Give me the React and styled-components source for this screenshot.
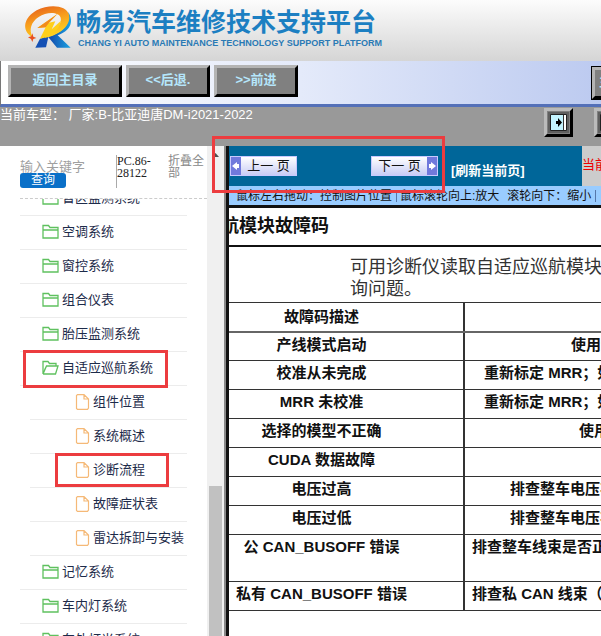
import React from 'react';
import styled, { createGlobalStyle, css } from 'styled-components';

const MENU = [
  { name: '盲区监测系统' },
  { name: '空调系统' },
  { name: '窗控系统' },
  { name: '组合仪表' },
  { name: '胎压监测系统' },
  {
    name: '自适应巡航系统',
    open: true,
    marked: true,
    children: [
      { name: '组件位置' },
      { name: '系统概述' },
      { name: '诊断流程', marked: true },
      { name: '故障症状表' },
      { name: '雷达拆卸与安装' },
    ],
  },
  { name: '记忆系统' },
  { name: '车内灯系统' },
  { name: '车外灯光系统' },
];

const FAULTS = [
  { desc: '产线模式启动', action: '使用诊断仪', indent: 106 },
  { desc: '校准从未完成', action: '重新标定 MRR；如', indent: 19 },
  { desc: 'MRR 未校准', action: '重新标定 MRR；如', indent: 19 },
  { desc: '选择的模型不正确', action: '使用诊断仪', indent: 114 },
  { desc: 'CUDA 数据故障', action: '', indent: 7 },
  { desc: '电压过高', action: '排查整车电压状态', indent: 45 },
  { desc: '电压过低', action: '排查整车电压状态', indent: 45 },
  { desc: '公 CAN_BUSOFF 错误', action: '排查整车线束是否正常', indent: 7, tall: true },
  { desc: '私有 CAN_BUSOFF 错误', action: '排查私 CAN 线束（', indent: 7 },
];

const Logo = () => (
  <svg width="60" height="50" viewBox="0 0 180 150" aria-hidden="true">
    <defs>
      <linearGradient id="ring" x1="0" y1="0" x2="0.4" y2="1">
        <stop offset="0" stopColor="#e2531c" />
        <stop offset="0.5" stopColor="#f79a1c" />
        <stop offset="1" stopColor="#ffd21f" />
      </linearGradient>
      <linearGradient id="leg" x1="0" y1="0" x2="1" y2="0">
        <stop offset="0" stopColor="#1546a8" />
        <stop offset="1" stopColor="#18a4e4" />
      </linearGradient>
    </defs>
    <path d="M145 30 C164 62 148 88 113 100 L152 137 L111 137 L84 104 C124 94 148 72 145 30Z" fill="url(#leg)" />
    <path d="M60 110 L86 101 L78 136 L46 137Z" fill="#1450b4" />
    <path
      d="M38 106 C2 86 12 46 50 25 C88 5 139 9 147 38 C154 68 124 97 74 108 L84 90 C112 80 126 64 122 47 C116 29 80 29 56 45 C32 61 26 84 38 106Z"
      fill="url(#ring)"
    />
    <path d="M112 36 L52 78 L77 76 L60 110 C94 103 118 84 123 56 L95 82 L106 58 L87 62Z" fill="#ffcf1a" />
    <path d="M112 36 L52 78 L77 76 L87 62Z" fill="#f28b1c" />
    <path d="M37 94 L40 104 L49 108 L40 111 L37 120 L33 111 L24 106 L34 103Z" fill="#e9501f" />
  </svg>
);

const FolderIcon = ({ open }) => (
  <svg width="17" height="16" viewBox="0 0 17 16" fill="none" stroke="#5fc15f" strokeWidth="1.3" aria-hidden="true">
    {open ? (
      <path d="M1 14V1.5H6L7.5 3.5H14V6M1 14L4.5 6H16L13.5 14H1M2.5 10L4.5 6" />
    ) : (
      <path d="M1 14V1.5H6.5L8 3.5H16V14ZM1 6H16" />
    )}
  </svg>
);

const FileIcon = () => (
  <svg width="15" height="16" viewBox="0 0 15 16" fill="none" stroke="#f5b977" strokeWidth="1.2" aria-hidden="true">
    <path d="M2.5 .6H9L13.5 5V14L12.5 15.4H2.5L1.5 14.4V1.6ZM9 .6V5H13.5" />
  </svg>
);

const PanelIcon = () => (
  <svg width="21" height="21" viewBox="0 0 21 21" aria-hidden="true">
    <path d="M0 0H21V21H0Z" fill="#5f5f5f" />
    <path d="M2.5 2.5H18.5V18.5H2.5Z" fill="#c4f4ff" stroke="#222" />
    <path d="M15.5 3V18" stroke="#333" />
    <path d="M17 3V18" stroke="#fff" strokeWidth="2" />
    <path d="M8 9H10V6L14 10.5L10 15V12H8Z" fill="#000" />
  </svg>
);

const ArrowIcon = ({ right }) => (
  <svg width="10" height="18" viewBox="0 0 10 18" aria-hidden="true">
    <path d="M0 0H10V18H0Z" fill="#7079dc" />
    <path
      d={right ? 'M2 7H4V5L9 9L4 13V11H2Z' : 'M8 7H6V5L1 9L6 13V11H8Z'}
      fill="#fff"
    />
  </svg>
);

const MenuItem = ({ item, sub }) => (
  <>
    <MenuRow $sub={sub}>
      <MenuLink href="#">
        {sub ? <FileIcon /> : <FolderIcon open={item.open} />}
        {item.name}
      </MenuLink>
      {item.marked && <RowMark $sub={sub} />}
    </MenuRow>
    {item.children &&
      item.children.map((child) => <MenuItem key={child.name} item={child} sub />)}
  </>
);

export const Sidebar = () => (
  <SidebarSection>
    <SidebarMain>
      <SearchBar>
        <SearchForm>
          <SearchInput placeholder="输入关键字" aria-label="输入关键字" />
          <SearchButton type="button">查询</SearchButton>
        </SearchForm>
        <Version>PC.86-28122</Version>
        <FoldLink href="#">折叠全部</FoldLink>
      </SearchBar>
      <MenuView>
        <MenuList>
          {MENU.map((item) => (
            <MenuItem key={item.name} item={item} />
          ))}
        </MenuList>
      </MenuView>
    </SidebarMain>
    <ScrollTrack>
      <svg width="7" height="4" viewBox="0 0 7 4" aria-hidden="true">
        <path d="M0 4L3.5 0L7 4Z" fill="#505050" />
      </svg>
      <ScrollThumb />
    </ScrollTrack>
  </SidebarSection>
);

export const Viewer = () => (
  <ViewerSection>
    <Pager>
      <PageLinks>
        <PageButton type="button">
          <ArrowIcon />
          <span>上一 页</span>
        </PageButton>
        <PageButton type="button">
          <span>下一 页</span>
          <ArrowIcon right />
        </PageButton>
        <Refresh href="#">[刷新当前页]</Refresh>
      </PageLinks>
      <Current>当前</Current>
    </Pager>
    <Hint>
      <span>鼠标左右拖动：控制图片位置</span>
      <HintLine />
      <span>鼠标滚轮向上:放大</span>
      <HintGap>滚轮向下：缩小</HintGap>
      <HintLine />
    </Hint>
    <Sheet>
      <SheetTitle>航模块故障码</SheetTitle>
      <SheetText>
        可用诊断仪读取自适应巡航模块
        <br />
        询问题。
      </SheetText>
      <FaultTable>
        <thead>
          <tr>
            <HeadCell>故障码描述</HeadCell>
            <HeadCell aria-label="措施" />
          </tr>
        </thead>
        <tbody>
          {FAULTS.map((fault) => (
            <FaultRow key={fault.desc} $tall={fault.tall}>
              <DescCell>{fault.desc}</DescCell>
              <ActionCell $indent={fault.indent}>{fault.action}</ActionCell>
            </FaultRow>
          ))}
        </tbody>
      </FaultTable>
    </Sheet>
  </ViewerSection>
);

const App = () => {
  return (
    <Page>
      <GlobalStyle />
      <Header>
        <Logo />
        <Brand>
          <BrandName>畅易汽车维修技术支持平台</BrandName>
          <BrandSub>CHANG YI AUTO MAINTENANCE TECHNOLOGY SUPPORT PLATFORM</BrandSub>
        </Brand>
      </Header>
      <Toolbar>
        <ToolButton type="button" $wide>
          返回主目录
        </ToolButton>
        <ToolButton type="button">&lt;&lt;后退.</ToolButton>
        <ToolButton type="button">&gt;&gt;前进</ToolButton>
        <LastButton type="button">主页</LastButton>
      </Toolbar>
      <InfoBar>
        <span>当前车型： 厂家:B-比亚迪唐DM-i2021-2022</span>
        <InfoTools>
          <IconButton type="button" aria-label="收起">
            <PanelIcon />
          </IconButton>
          <IconButton type="button" aria-label="展开">
            <PanelIcon />
          </IconButton>
        </InfoTools>
      </InfoBar>
      <Body>
        <Sidebar />
        <Viewer />
        <PagerMark />
      </Body>
    </Page>
  );
};

export default App;

const sans = css`
  font-family: 'Liberation Sans', 'Noto Sans CJK SC', sans-serif;
`;

const mark = css`
  position: absolute;
  border: 3px solid #ec3c3f;
  pointer-events: none;
`;

const GlobalStyle = createGlobalStyle`
  * {
    box-sizing: border-box;
  }

  body {
    margin: 0;
    overflow: hidden;
  }

  a {
    color: inherit;
    text-decoration: none;
  }
`;

const Page = styled.div`
  ${sans}
  display: flex;
  flex-direction: column;
  height: 100vh;
  overflow: hidden;
  background-color: white;
`;

const Header = styled.header`
  display: flex;
  flex-shrink: 0;
  height: 61px;
  padding: 2px 0 0 20px;
  background: linear-gradient(#fcfcfc, #d5d5d5);
`;

const Brand = styled.div`
  display: flex;
  flex-direction: column;
  margin-left: -4px;
  white-space: nowrap;
`;

const BrandName = styled.h1`
  margin: 4px 0 0;
  color: #1c7fc2;
  font-size: 25px;
  font-weight: 700;
  line-height: 32px;
`;

const BrandSub = styled.span`
  padding-left: 2px;
  color: #2a7ab5;
  font-size: 9px;
  font-weight: 700;
  line-height: 10px;
`;

const Toolbar = styled.nav`
  display: flex;
  flex-shrink: 0;
  gap: 4px;
  height: 46px;
  padding: 4px 0 0 7px;
  overflow: hidden;
  border-left: 1px solid #777;
  border-bottom: 3px solid #5470b8;
  background: linear-gradient(90deg, #fff, #e4eafa 50%, #bccaf0);
`;

const ToolButton = styled.button`
  ${sans}
  flex-shrink: 0;
  width: ${({ $wide }) => ($wide ? '114px' : '84px')};
  height: 32px;
  padding: 0 0 2px;
  border: 3px solid;
  border-color: #b4b4b4 #000 #000 #b4b4b4;
  background-color: #808080;
  color: #b5e6fb;
  font-size: 13px;
  font-weight: 700;
  line-height: 20px;
`;

const LastButton = styled(ToolButton)`
  margin: 2px -75px 0 auto;
  padding-left: 4px;
  outline: 1px solid #000;
  text-align: left;
`;

const InfoBar = styled.div`
  display: flex;
  flex-shrink: 0;
  justify-content: space-between;
  height: 39px;
  overflow: hidden;
  background-color: #999;
  color: white;
  font-size: 13px;
  line-height: 16px;
  white-space: nowrap;
`;

const InfoTools = styled.div`
  display: flex;
  gap: 21px;
  margin: 1px -22px 0 0;
`;

const IconButton = styled.button`
  display: flex;
  width: 29px;
  height: 29px;
  padding: 1px;
  border: 3px solid;
  border-color: #bbb #000 #000 #bbb;
  background-color: #808080;
`;

const Body = styled.main`
  display: flex;
  flex: 1;
  position: relative;
  min-height: 0;
`;

const PagerMark = styled.div`
  ${mark}
  top: -10px;
  left: 212px;
  width: 233px;
  height: 57px;
`;

const SidebarSection = styled.aside`
  display: flex;
  flex: 0 0 226px;
`;

const SidebarMain = styled.div`
  display: flex;
  flex: 1;
  flex-direction: column;
  min-width: 0;
`;

const SearchBar = styled.div`
  display: flex;
  flex-shrink: 0;
  height: 53px;
  margin-left: 20px;
  padding-top: 9px;
  border-bottom: 1px dashed #ccc;
`;

const SearchForm = styled.div`
  width: 96px;
  padding-top: 4px;
`;

const SearchInput = styled.input`
  ${sans}
  display: block;
  width: 90px;
  height: 14px;
  padding: 0;
  border: 0;
  font-size: 13px;

  &::placeholder {
    color: #a0a0a0;
  }
`;

const SearchButton = styled.button`
  ${sans}
  display: block;
  width: 46px;
  height: 15px;
  padding: 0;
  border: 0;
  border-radius: 3px;
  background-color: #0a70c8;
  color: white;
  font-size: 12px;
  line-height: 15px;
`;

const Version = styled.span`
  width: 52px;
  height: 33px;
  border-left: 1px solid #aaa;
  color: #222;
  font-family: 'Liberation Serif', serif;
  font-size: 12px;
  line-height: 12px;
`;

const FoldLink = styled.a`
  width: 38px;
  color: #888;
  font-size: 12px;
  line-height: 12px;
`;

const MenuView = styled.div`
  flex: 1;
  min-height: 0;
  overflow: hidden;
`;

/* list is scrolled half a row down */
const MenuList = styled.ul`
  margin: -17px 20px 0;
  padding: 0;
  list-style: none;
`;

const MenuRow = styled.li`
  position: relative;
  height: 34px;
  margin-left: ${({ $sub }) => ($sub ? '10px' : '0')};
  padding-left: ${({ $sub }) => ($sub ? '45px' : '22px')};
  border-bottom: 1px solid #ececec;
`;

const MenuLink = styled.a`
  display: flex;
  align-items: center;
  gap: 3px;
  height: 29px;
  color: #1d2b4a;
  font-size: 13px;
  white-space: nowrap;

  svg {
    margin-top: 3px;
  }
`;

const RowMark = styled.div`
  ${mark}
  top: ${({ $sub }) => ($sub ? '-1px' : '-2px')};
  left: ${({ $sub }) => ($sub ? '25px' : '3px')};
  width: ${({ $sub }) => ($sub ? '114px' : '145px')};
  height: ${({ $sub }) => ($sub ? '34px' : '38px')};
`;

const ScrollTrack = styled.div`
  display: flex;
  flex: 0 0 19px;
  flex-direction: column;
  align-items: center;
  padding-top: 7px;
  border-right: 2px solid #8a8a8a;
  background-color: #f0f0f0;
`;

const ScrollThumb = styled.div`
  width: 13px;
  height: 150px;
  margin-top: auto;
  background-color: #c1c1c1;
`;

const ViewerSection = styled.section`
  display: flex;
  flex: 1;
  flex-direction: column;
  min-width: 0;
  overflow: hidden;
  border-left: 3px solid #111;
`;

const Pager = styled.div`
  display: flex;
  flex-shrink: 0;
  justify-content: space-between;
  height: 40px;
  background-color: #069;
`;

const PageLinks = styled.div`
  display: flex;
  align-items: flex-start;
  padding: 10px 0 0 1px;
`;

const PageButton = styled.button`
  ${sans}
  display: flex;
  align-items: center;
  width: 67px;
  height: 20px;
  padding: 0;
  border: 1px solid #c9c9ff;
  background: linear-gradient(#fff, #c8cdf5);
  color: #111;
  font-size: 13px;
  line-height: 18px;

  span {
    flex: 1;
    text-align: center;
    white-space: nowrap;
  }

  & + & {
    margin-left: 74px;
  }
`;

const Refresh = styled.a`
  margin: 5px 0 0 13px;
  color: white;
  font-size: 13px;
  font-weight: 700;
  line-height: 20px;
  white-space: nowrap;
`;

const Current = styled.div`
  flex: 0 0 19px;
  overflow: hidden;
  background-color: #ccc;
  color: #e00;
  font-size: 13px;
  line-height: 38px;
  white-space: nowrap;
`;

const Hint = styled.div`
  display: flex;
  flex-shrink: 0;
  height: 19px;
  padding-left: 7px;
  background-color: #9cf;
  color: #111;
  font-size: 12px;
  line-height: 20px;
  white-space: nowrap;
`;

const HintLine = styled.i`
  width: 1px;
  height: 12px;
  margin: 4px 3px 0 4px;
  background-color: #5577aa;
`;

const HintGap = styled.span`
  margin-left: 8px;
`;

/* drawing is dragged to the left, its first part is out of view */
const Sheet = styled.article`
  flex: 1;
  min-height: 0;
  margin-left: -49px;
  border-top: 3px solid #111;
  background-color: white;
  color: #111;
`;

const SheetTitle = styled.h2`
  height: 39px;
  margin: 0;
  padding-left: 41px;
  border-bottom: 2px solid #111;
  font-size: 18px;
  line-height: 36px;
`;

const SheetText = styled.p`
  height: 55px;
  margin: 0;
  padding: 9px 0 0 170px;
  color: #333;
  font-size: 18px;
  line-height: 22px;
  white-space: nowrap;
`;

const FaultTable = styled.table`
  width: 100%;
  border-collapse: collapse;
  table-layout: fixed;
  font-size: 15px;
  font-weight: 700;
  line-height: 20px;
`;

const HeadCell = styled.th`
  height: 29px;
  padding: 0;
  border-top: 1px solid #333;
  border-bottom: 2px solid #666;

  &:first-child {
    width: 284px;
    border-right: 2px solid #333;
  }
`;

const FaultRow = styled.tr`
  height: ${({ $tall }) => ($tall ? '47px' : '29px')};
  vertical-align: top;
`;

const DescCell = styled.td`
  padding: 2px 0 0;
  border-right: 2px solid #333;
  border-bottom: 1px solid #333;
  text-align: center;
`;

const ActionCell = styled.td`
  padding: 2px 0 0 ${({ $indent }) => $indent}px;
  overflow: hidden;
  border-bottom: 1px solid #333;
  white-space: nowrap;
`;
